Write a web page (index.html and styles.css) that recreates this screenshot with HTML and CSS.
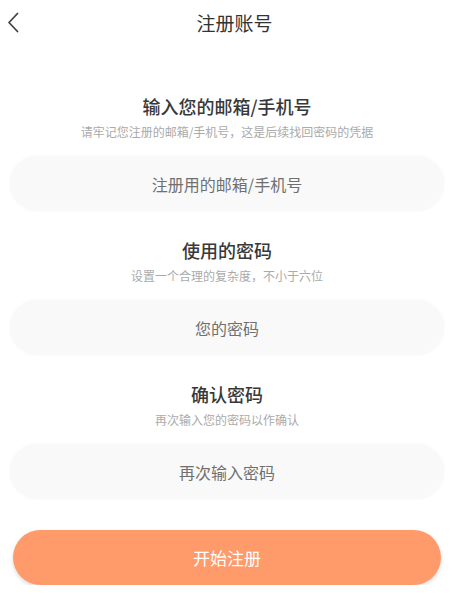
FILE: index.html
```html
<!DOCTYPE html>
<html lang="zh-CN">
<head>
<meta charset="utf-8">
<title>注册账号</title>
<link rel="stylesheet" href="styles.css">
</head>
<body>
<header class="topbar">
  <button class="back" aria-label="返回">
    <svg width="12" height="21" viewBox="0 0 12 21"><path d="M10.5 1.5 L2 10.5 L10.5 19.5" fill="none" stroke="#444" stroke-width="1.8" stroke-linecap="round" stroke-linejoin="round"/></svg>
  </button>
  <h1 class="title">注册账号</h1>
</header>
<main class="form">
  <section class="field">
    <h2 class="label">输入您的邮箱/手机号</h2>
    <p class="hint">请牢记您注册的邮箱/手机号，这是后续找回密码的凭据</p>
    <input class="input" type="text" placeholder="注册用的邮箱/手机号">
  </section>
  <section class="field">
    <h2 class="label">使用的密码</h2>
    <p class="hint">设置一个合理的复杂度，不小于六位</p>
    <input class="input" type="password" placeholder="您的密码">
  </section>
  <section class="field">
    <h2 class="label">确认密码</h2>
    <p class="hint">再次输入您的密码以作确认</p>
    <input class="input" type="password" placeholder="再次输入密码">
  </section>
  <button class="submit">开始注册</button>
</main>
</body>
</html>
```
FILE: styles.css
```css
* { box-sizing: border-box; }
html, body {
  margin: 0;
  padding: 0;
  background: #fff;
  font-family: "Noto Sans CJK SC", "Noto Sans", sans-serif;
  color: #333;
}
.topbar {
  position: relative;
  height: 46px;
  display: flex;
  align-items: center;
  justify-content: center;
}
.back {
  position: absolute;
  left: 7px;
  top: 12px;
  padding: 0;
  border: 0;
  background: none;
  width: 12px;
  height: 21px;
  display: block;
}
.back svg { display: block; }
.title {
  margin: 0;
  font-size: 19px;
  font-weight: 400;
  line-height: 26px;
  color: #333;
  padding-left: 3px;
}
.form {
  padding: 47px 22px 0 10px;
  display: flex;
  flex-direction: column;
}
.field {
  display: flex;
  flex-direction: column;
  align-items: center;
  margin-bottom: 26px;
}
.field:last-of-type { margin-bottom: 31px; }
.label {
  margin: 0;
  font-size: 18px;
  font-weight: 500;
  line-height: 26px;
  color: #383838;
}
.hint {
  margin: 4px 0 0;
  font-size: 12px;
  line-height: 18px;
  color: #aaa;
}
.input {
  margin-top: 15px;
  width: 100%;
  height: 55px;
  border: 0;
  border-radius: 28px;
  background: #f9f9f9;
  box-shadow: 0 0 3px 1px #fafafa;
  font-family: inherit;
  font-size: 16px;
  color: #333;
  text-align: center;
  outline: none;
}
.input::placeholder { color: #707070; }
.submit {
  margin: 0 3px;
  height: 55px;
  border: 0;
  border-radius: 28px;
  background: #ff9a6a;
  box-shadow: 0 2px 4px rgba(0, 0, 0, 0.14);
  color: #fff;
  font-family: inherit;
  font-size: 17px;
  font-weight: 400;
}
```
